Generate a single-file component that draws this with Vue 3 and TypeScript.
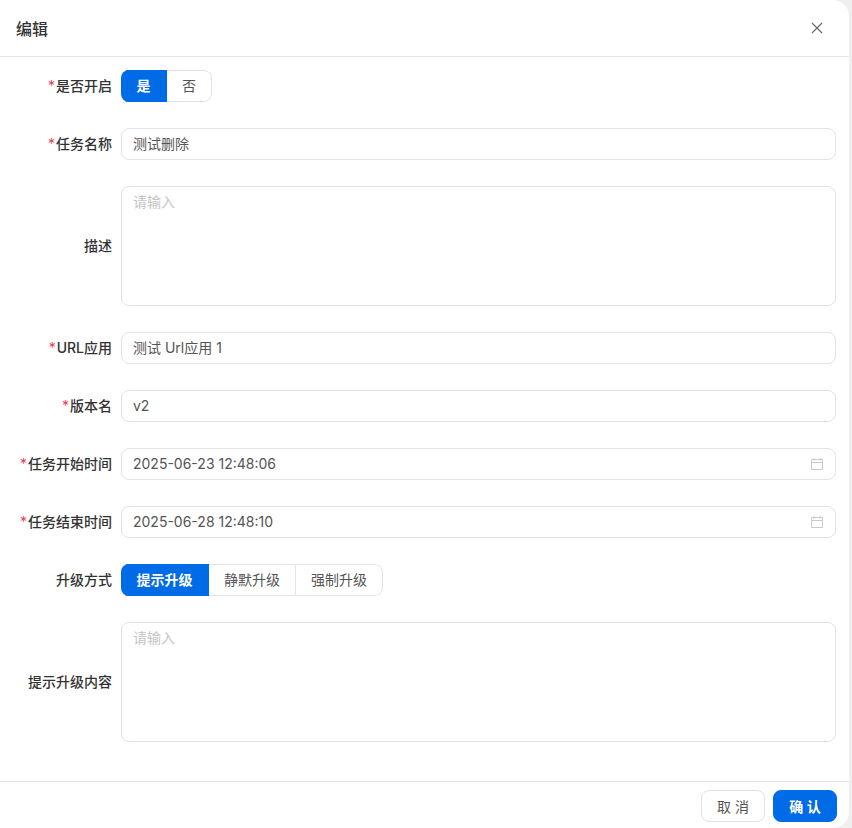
<script setup lang="ts">
interface Seg { text: string; active?: boolean }
const yesNo: Seg[] = [{ text: '是', active: true }, { text: '否' }]
const modes: Seg[] = [{ text: '提示升级', active: true }, { text: '静默升级' }, { text: '强制升级' }]
</script>

<template>
  <div class="backdrop">
    <div class="modal">
      <header class="head">
        <span class="title">编辑</span>
        <svg class="close" width="12" height="12" viewBox="0 0 12 12" fill="none">
          <path d="M1 1l10 10M11 1L1 11" stroke="#666" stroke-width="1.1" />
        </svg>
      </header>

      <form class="body">
        <div class="row">
          <label class="label"><i>*</i>是否开启</label>
          <div class="seg">
            <span v-for="s in yesNo" :key="s.text" class="opt narrow" :class="{ on: s.active }">{{ s.text }}</span>
          </div>
        </div>
        <div class="row">
          <label class="label"><i>*</i>任务名称</label>
          <div class="input">测试删除</div>
        </div>
        <div class="row">
          <label class="label">描述</label>
          <div class="area">请输入</div>
        </div>
        <div class="row">
          <label class="label"><i>*</i>URL应用</label>
          <div class="input">测试 Url应用 1</div>
        </div>
        <div class="row">
          <label class="label"><i>*</i>版本名</label>
          <div class="input">v2</div>
        </div>
        <div class="row">
          <label class="label"><i>*</i>任务开始时间</label>
          <div class="input date">
            <span>2025-06-23 12:48:06</span>
            <svg width="14" height="14" viewBox="0 0 14 14" fill="none" stroke="#c9c9c9">
              <path d="M1.5 2.5h11v10h-11zM1.5 5.5h11M4 .8v3M10 .8v3" />
            </svg>
          </div>
        </div>
        <div class="row">
          <label class="label"><i>*</i>任务结束时间</label>
          <div class="input date">
            <span>2025-06-28 12:48:10</span>
            <svg width="14" height="14" viewBox="0 0 14 14" fill="none" stroke="#c9c9c9">
              <path d="M1.5 2.5h11v10h-11zM1.5 5.5h11M4 .8v3M10 .8v3" />
            </svg>
          </div>
        </div>
        <div class="row">
          <label class="label">升级方式</label>
          <div class="seg">
            <span v-for="s in modes" :key="s.text" class="opt" :class="{ on: s.active }">{{ s.text }}</span>
          </div>
        </div>
        <div class="row">
          <label class="label">提示升级内容</label>
          <div class="area">请输入</div>
        </div>
      </form>

      <footer class="foot">
        <button type="button" class="btn">取 消</button>
        <button type="button" class="btn primary">确 认</button>
      </footer>
    </div>
  </div>
</template>

<style>
html, body { margin: 0; background: #f0f0f0; }
</style>

<style scoped>
.backdrop {
  width: 852px;
  height: 828px;
  background: #efefef;
  overflow: hidden;
  font-family: Inter, "Noto Sans CJK SC", sans-serif;
  font-size: 14px;
  color: #333;
}
.modal {
  width: 849px;
  height: 828px;
  background: #fff;
  border-radius: 0 16px 16px 0;
  display: flex;
  flex-direction: column;
  box-sizing: border-box;
}
.head {
  height: 57px;
  flex: none;
  box-sizing: border-box;
  border-bottom: 1px solid #e5e5e5;
  display: flex;
  align-items: center;
  justify-content: space-between;
  padding: 0 26px 0 16px;
}
.title { font-size: 16px; font-weight: 500; color: #333; }
.body {
  flex: 1;
  padding: 13px 13px 0 0;
  display: flex;
  flex-direction: column;
  gap: 26px;
}
.row { display: flex; align-items: center; }
.label {
  width: 112px;
  flex: none;
  margin-right: 9px;
  padding-bottom: 2px;
  text-align: right;
  font-weight: 500;
  color: #333;
  white-space: nowrap;
}
.label i { font-style: normal; color: #f5385e; font-weight: 400; margin-right: 1px; }
.input, .area {
  flex: 1;
  box-sizing: border-box;
  border: 1px solid #e3e3e3;
  border-radius: 8px;
  color: #555;
  padding: 0 11px;
}
.input { height: 32px; line-height: 30px; }
.date { display: flex; align-items: center; justify-content: space-between; padding-right: 11px; }
.area { height: 120px; padding: 5px 11px; line-height: 20px; color: #c4c4c4; }
.seg {
  display: flex;
  height: 32px;
  border-radius: 8px;
  overflow: hidden;
}
.opt {
  width: 87px;
  box-sizing: border-box;
  height: 32px;
  line-height: 30px;
  text-align: center;
  color: #555;
  border: 1px solid #e3e3e3;
  border-left: 0;
}
.opt:last-child { border-radius: 0 8px 8px 0; }
.opt.narrow { width: 45px; }
.opt.on {
  width: 88px;
  background: #006be6;
  border-color: #006be6;
  color: #fff;
  font-weight: 600;
}
.opt.narrow.on { width: 46px; }
.foot {
  height: 47px;
  flex: none;
  box-sizing: border-box;
  border-top: 1px solid #e5e5e5;
  display: flex;
  justify-content: flex-end;
  gap: 8px;
  padding: 8px 12px 0 0;
}
.btn {
  width: 64px;
  height: 32px;
  box-sizing: border-box;
  border: 1px solid #e3e3e3;
  border-radius: 8px;
  background: #fff;
  color: #555;
  font: inherit;
  padding: 0;
}
.btn.primary { background: #006be6; border-color: #006be6; color: #fff; font-weight: 600; }
</style>
